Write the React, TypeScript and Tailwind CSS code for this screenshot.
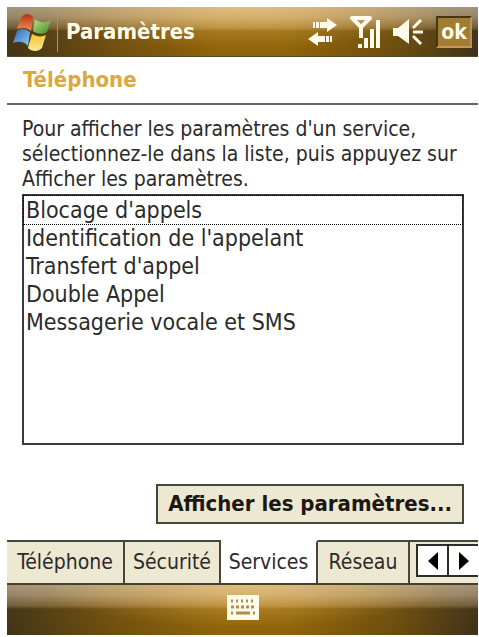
import { useState } from 'react';
import type { ReactNode } from 'react';

const services = [
  "Blocage d'appels",
  "Identification de l'appelant",
  "Transfert d'appel",
  'Double Appel',
  'Messagerie vocale et SMS',
];

const tabs = [
  { label: 'Téléphone', width: 'w-[118px]' },
  { label: 'Sécurité', width: 'w-24' },
  { label: 'Services', width: 'w-[97px]' },
  { label: 'Réseau', width: 'w-[92px]' },
];

function StartLogo() {
  return (
    <svg width="40" height="40" viewBox="0 0 40 40" aria-hidden="true">
      <defs>
        <linearGradient id="red" x1="0" y1="0" x2="0" y2="1">
          <stop offset="0" stopColor="#b8330f" />
          <stop offset="1" stopColor="#f0905a" />
        </linearGradient>
        <linearGradient id="green" x1="0" y1="0" x2="1" y2="1">
          <stop offset="0" stopColor="#c0de88" />
          <stop offset="1" stopColor="#3f8a26" />
        </linearGradient>
        <linearGradient id="blue" x1="0" y1="0" x2="1" y2="1">
          <stop offset="0" stopColor="#2f62b8" />
          <stop offset="1" stopColor="#8fd0f4" />
        </linearGradient>
        <linearGradient id="yellow" x1="0" y1="0" x2="0" y2="1">
          <stop offset="0" stopColor="#f3c832" />
          <stop offset="1" stopColor="#fbe795" />
        </linearGradient>
      </defs>
      <path d="M8 6 C11 1 17 1 20 5 L18 19 C14 15 9 15 4 17 Z" fill="url(#red)" />
      <path d="M22 7 C26 11 32 11 38 8 L34 20 C30 23 24 22 20 19 Z" fill="url(#green)" />
      <path d="M4 19 C9 16 13 17 17 20 L15 34 C11 29 5 29 0 31 Z" fill="url(#blue)" />
      <path d="M19 22 C24 25 29 25 33 23 L29 36 C25 40 19 40 15 36 Z" fill="url(#yellow)" />
    </svg>
  );
}

function ConnectionIcon() {
  return (
    <svg width="30" height="28" viewBox="0 0 30 28" fill="#fffbea" aria-hidden="true">
      <path d="M5 4h2v6H5zM8 4h3v6H8zM12 4h7V0l10 7-10 7v-4h-7z" />
      <path d="M24 18h-2v6h2zM21 18h-3v6h3zM17 18h-7v-4L0 21l10 7v-4h7z" />
    </svg>
  );
}

function SignalIcon() {
  return (
    <svg width="31" height="34" viewBox="0 0 31 34" fill="#fffbea" aria-hidden="true">
      <path d="M2 3h18l-9 9z" fill="none" stroke="#fffbea" strokeWidth="4" strokeLinejoin="round" />
      <path d="M9 11h4v12H9zM8 29h4v4H8zM14 23h4v10h-4zM20 14h4v19h-4zM26 5h4v28h-4z" />
    </svg>
  );
}

function VolumeIcon() {
  return (
    <svg width="31" height="26" viewBox="0 0 31 26" fill="#fffbea" aria-hidden="true">
      <path d="M0 9h5l11-9v25L5 17H0z" />
      <path d="M20 13h10M20 9l8-8M20 17l8 8" fill="none" stroke="#fffbea" strokeWidth="3" />
    </svg>
  );
}

function KeyboardIcon() {
  return (
    <svg width="32" height="25" viewBox="0 0 32 25" aria-hidden="true">
      <path d="M0 0h32v25H0z" fill="#fffbe8" />
      <g stroke="#b08c50" strokeWidth="3">
        <path d="M4 6h24" strokeDasharray="2 3" />
        <path d="M4 12h24" strokeDasharray="3 2" />
        <path d="M4 18h2M9 18h14M26 18h2" />
      </g>
    </svg>
  );
}

// Glossy bar shared by the title bar and the soft key bar
function Bar({ children, className }: { children: ReactNode; className: string }) {
  return (
    <div className="bg-[linear-gradient(to_right,#453718_0%,#755310_22%,#98690a_45%,#98690a_60%,#735210_82%,#43351a_100%)]">
      <div className="bg-[linear-gradient(to_bottom,#fff0dc80_0%,#ffe8cc70_20%,#ffdcb038_42%,#00000000_48%,#00000010_100%)]">
        <div
          className={`flex h-[50px] items-center bg-[radial-gradient(ellipse_at_50%_0%,#ffd89060_0%,#ffd89000_60%)] ${className}`}
        >
          {children}
        </div>
      </div>
    </div>
  );
}

export default function App() {
  const [selected, setSelected] = useState(0);
  const [activeTab, setActiveTab] = useState(2);

  return (
    <main className="bg-white pt-[7px] pr-px pb-0.5 pl-[7px] font-['DejaVu_Sans_Condensed','DejaVu_Sans',sans-serif] text-[#2b2b2b]">
      <header>
        <Bar className="border-b border-[#55492c] pr-[6px] pl-[6px]">
          <button type="button" aria-label="Démarrer" className="border-r border-[#a89468] pr-1">
            <StartLogo />
          </button>
          <h1 className="ml-2 text-[22px] font-bold text-[#fffbea]">Paramètres</h1>
          <div className="ml-auto flex items-center gap-3">
            <ConnectionIcon />
            <SignalIcon />
            <VolumeIcon />
            <button
              type="button"
              className="h-8 w-9 border-2 border-t-[#46370f] border-r-[#b4935a] border-b-[#c4984e] border-l-[#46370f] bg-[#a37c34] text-[21px] leading-6 font-bold text-[#fffbea]"
            >
              ok
            </button>
          </div>
        </Bar>
        <h2 className="border-b-2 border-[#66666a] px-4 py-[9px] text-[22px] leading-7 font-bold text-[#d9a93f]">
          Téléphone
        </h2>
      </header>

      <section className="pt-3 pr-[14px] pb-4 pl-[15px]">
        <p id="services-help" className="pb-0.5 text-[21px] leading-[25px]">
          Pour afficher les paramètres d'un service, sélectionnez-le dans la liste, puis appuyez sur
          Afficher les paramètres.
        </p>
        <ul
          role="listbox"
          aria-labelledby="services-help"
          className="min-h-[251px] border-2 border-[#3a3a3e] text-[23px] leading-7"
        >
          {services.map((service, index) => (
            <li
              key={service}
              role="option"
              tabIndex={0}
              aria-selected={index === selected}
              onClick={() => setSelected(index)}
              className={
                index === selected
                  ? 'cursor-default px-0.5 outline-1 outline-dotted outline-black'
                  : 'cursor-default px-0.5 outline-none'
              }
            >
              {service}
            </li>
          ))}
        </ul>
        <div className="mt-[39px] flex justify-end">
          <button
            type="button"
            className="h-10 border-2 border-[#45453a] bg-[#ece8d2] px-2.5 text-[22px] leading-8 font-bold text-[#1c1710]"
          >
            Afficher les paramètres...
          </button>
        </div>
      </section>

      <nav className="flex h-[45px] border-b-2 border-[#45402c] text-[21px]">
        <div role="tablist" className="flex">
          {tabs.map((tab, index) => (
            <button
              key={tab.label}
              type="button"
              role="tab"
              aria-selected={index === activeTab}
              onClick={() => setActiveTab(index)}
              className={`${tab.width} border-t-2 border-r-2 border-r-[#45453a] ${
                index === activeTab ? 'border-t-white bg-white' : 'border-t-[#45453a] bg-[#ece8d2]'
              }`}
            >
              {tab.label}
            </button>
          ))}
        </div>
        <div className="flex flex-1 items-start border-t-2 border-[#45453a] bg-[#ece8d2] pt-0.5 pl-1.5">
          <div className="flex h-[33px] flex-1 border-2 border-r-0 border-[#2e2e28] bg-white">
            <button
              type="button"
              aria-label="Onglets précédents"
              className="flex flex-1 items-center justify-center border-r-2 border-[#2e2e28]"
            >
              <svg width="10" height="18" viewBox="0 0 10 18" aria-hidden="true">
                <path d="M10 0v18L0 9z" />
              </svg>
            </button>
            <button
              type="button"
              aria-label="Onglets suivants"
              className="flex flex-1 items-center justify-center"
            >
              <svg width="10" height="18" viewBox="0 0 10 18" aria-hidden="true">
                <path d="M0 0v18l10-9z" />
              </svg>
            </button>
          </div>
        </div>
      </nav>

      <footer>
        <Bar className="justify-center pb-1.5">
          <button type="button" aria-label="Clavier">
            <KeyboardIcon />
          </button>
        </Bar>
      </footer>
    </main>
  );
}
